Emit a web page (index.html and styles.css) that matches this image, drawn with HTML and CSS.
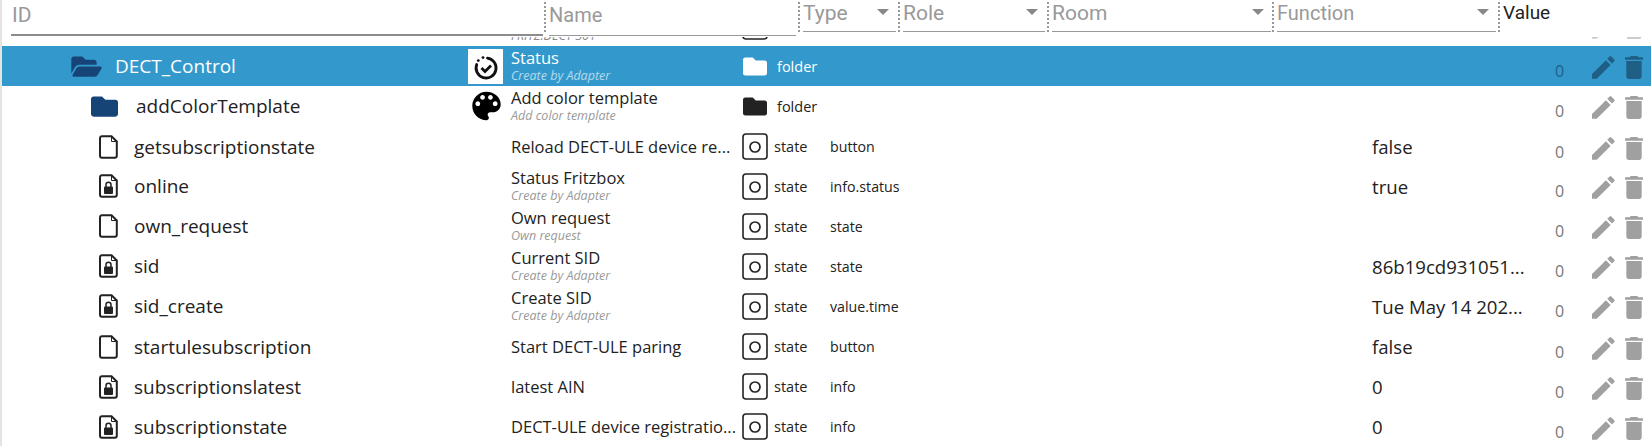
FILE: index.html
```html
<!DOCTYPE html>
<html lang="en">

<head>
  <meta charset="UTF-8" />
  <title>Objects</title>
  <link rel="stylesheet" href="styles.css">
</head>

<body>
  <svg class="defs" width="0" height="0">
    <symbol id="i-folder-open" viewBox="0 0 576 512"><path d="M572.694 292.093L500.27 416.248A63.997 63.997 0 0 1 444.989 448H45.025c-18.523 0-30.064-20.093-20.731-36.093l72.424-124.155A64 64 0 0 1 152 256h399.964c18.523 0 30.064 20.093 20.73 36.093zM152 224h328v-48c0-26.51-21.49-48-48-48H272l-64-64H48C21.49 64 0 85.49 0 112v278.046l69.077-118.418C86.214 242.25 117.989 224 152 224z"/></symbol>
    <symbol id="i-folder" viewBox="0 64 512 384"><path d="M464 128H272l-64-64H48C21.49 64 0 85.49 0 112v288c0 26.51 21.49 48 48 48h416c26.51 0 48-21.49 48-48V176c0-26.51-21.49-48-48-48z"/></symbol>
    <symbol id="i-file" viewBox="0 0 19 24"><path d="M3 1.2h9.500L17.800 6.500V20.800a2 2 0 0 1-2 2H3a2 2 0 0 1-2-2V3.200a2 2 0 0 1 2-2z" fill="none" stroke="currentColor" stroke-width="2"/><path d="M12.500 1.500V6.500H17.500" fill="none" stroke="currentColor" stroke-width="1"/></symbol>
    <symbol id="i-file-lock" viewBox="0 0 19 24"><path d="M3 1.2h9.500L17.800 6.500V20.800a2 2 0 0 1-2 2H3a2 2 0 0 1-2-2V3.200a2 2 0 0 1 2-2z" fill="none" stroke="currentColor" stroke-width="2"/><path d="M12.500 1.500V6.500H17.500" fill="none" stroke="currentColor" stroke-width="1"/><rect x="5" y="12.500" width="9" height="7.500" rx="1"/><path d="M7 13V10.800a2.500 2.500 0 0 1 5 0V13" fill="none" stroke="currentColor" stroke-width="1.500"/></symbol>
    <symbol id="i-state" viewBox="0 0 26 27"><rect x="1" y="1" width="24" height="25" rx="3" fill="none" stroke="currentColor" stroke-width="1.600"/><circle cx="13" cy="14" r="5" fill="none" stroke="currentColor" stroke-width="1.700"/></symbol>
    <symbol id="i-palette" viewBox="2.500 2.500 19 19"><path d="M12 3c-4.970 0-9 4.030-9 9s4.030 9 9 9c.830 0 1.500-.670 1.500-1.500 0-.390-.150-.740-.390-1.010-.230-.260-.380-.610-.380-.990 0-.830.670-1.500 1.500-1.500H16c2.760 0 5-2.240 5-5 0-4.420-4.030-8-9-8zm-5.500 9c-.830 0-1.500-.670-1.500-1.500S5.670 9 6.500 9 8 9.670 8 10.500 7.330 12 6.500 12zm3-4C8.670 8 8 7.330 8 6.500S8.670 5 9.500 5s1.500.670 1.500 1.500S10.330 8 9.500 8zm5 0c-.830 0-1.500-.670-1.500-1.500S13.670 5 14.500 5s1.500.670 1.500 1.500S15.330 8 14.500 8zm3 4c-.830 0-1.500-.670-1.500-1.500S16.670 9 17.500 9s1.500.670 1.500 1.500-.670 1.500-1.500 1.500z"/></symbol>
    <symbol id="i-status" viewBox="0 0 35 35"><path d="M19.500 9.100a10 10 0 1 1-10.800 6.400" fill="none" stroke="#111" stroke-width="2.800" stroke-linecap="round"/><circle cx="10.300" cy="11.600" r="1.400" fill="#111"/><circle cx="15" cy="8.600" r="1.400" fill="#111"/><path d="M13.500 19l3.500 3.500 6-6" fill="none" stroke="#111" stroke-width="2.800"/></symbol>
    <symbol id="i-edit" viewBox="3 3 18.300 18"><path d="M3 17.250V21h3.750L17.810 9.940l-3.750-3.750L3 17.250zM20.710 7.040c.39-.39.39-1.020 0-1.410l-2.340-2.340a.9959.9959 0 0 0-1.410 0l-1.830 1.830 3.750 3.750 1.830-1.830z"/></symbol>
    <symbol id="i-delete" viewBox="5 3 14 18"><path d="M6 19c0 1.100.9 2 2 2h8c1.100 0 2-.9 2-2V7H6v12zM19 4h-3.500l-1-1h-5l-1 1H5v2h14V4z"/></symbol>
  </svg>

  <div class="page">
    <div class="filters">
      <div class="filter filter-id"><span class="filter-label">ID</span></div>
      <div class="filter filter-name"><span class="filter-label">Name</span></div>
      <div class="filter filter-type"><span class="filter-label">Type</span><i class="arrow"></i></div>
      <div class="filter filter-role"><span class="filter-label">Role</span><i class="arrow"></i></div>
      <div class="filter filter-room"><span class="filter-label">Room</span><i class="arrow"></i></div>
      <div class="filter filter-func"><span class="filter-label">Function</span><i class="arrow"></i></div>
      <div class="filter-value">Value</div>
    </div>

    <div class="peek">
      <div class="row">
        <div class="cell-id"></div>
        <div class="cell-icon"><svg class="lamp" width="26" height="16"><ellipse cx="13" cy="4" rx="12" ry="4" fill="#bbb"/></svg></div>
        <div class="cell-name"><div class="title">&nbsp;</div><div class="sub">FRITZ!DECT 301</div></div>
        <div class="cell-type"><svg class="ic-state"><use href="#i-state"/></svg></div>
        <div class="cell-role"></div>
        <div class="cell-value"></div>
        <div class="cell-zero"></div>
        <div class="cell-actions">
          <svg class="ic-edit"><use href="#i-edit"/></svg>
          <svg class="ic-delete"><use href="#i-delete"/></svg>
        </div>
      </div>
    </div>

    <div class="row selected">
      <div class="cell-id depth-1"><svg class="ic-folder-open"><use href="#i-folder-open"/></svg><span>DECT_Control</span></div>
      <div class="cell-icon"><span class="icon-box"><svg class="ic-status"><use href="#i-status"/></svg></span></div>
      <div class="cell-name"><div class="title">Status</div><div class="sub">Create by Adapter</div></div>
      <div class="cell-type"><svg class="ic-type-folder"><use href="#i-folder"/></svg><span>folder</span></div>
      <div class="cell-role"></div>
      <div class="cell-value"></div>
      <div class="cell-zero">0</div>
      <div class="cell-actions">
        <svg class="ic-edit"><use href="#i-edit"/></svg>
        <svg class="ic-delete"><use href="#i-delete"/></svg>
      </div>
    </div>

    <div class="row">
      <div class="cell-id depth-2"><svg class="ic-folder"><use href="#i-folder"/></svg><span>addColorTemplate</span></div>
      <div class="cell-icon"><svg class="ic-palette"><use href="#i-palette"/></svg></div>
      <div class="cell-name"><div class="title">Add color template</div><div class="sub">Add color template</div></div>
      <div class="cell-type"><svg class="ic-type-folder"><use href="#i-folder"/></svg><span>folder</span></div>
      <div class="cell-role"></div>
      <div class="cell-value"></div>
      <div class="cell-zero">0</div>
      <div class="cell-actions">
        <svg class="ic-edit"><use href="#i-edit"/></svg>
        <svg class="ic-delete"><use href="#i-delete"/></svg>
      </div>
    </div>

    <div class="row">
      <div class="cell-id depth-3"><svg class="ic-file"><use href="#i-file"/></svg><span>getsubscriptionstate</span></div>
      <div class="cell-icon"></div>
      <div class="cell-name"><div class="title">Reload DECT-ULE device re...</div></div>
      <div class="cell-type"><svg class="ic-state"><use href="#i-state"/></svg><span>state</span></div>
      <div class="cell-role">button</div>
      <div class="cell-value">false</div>
      <div class="cell-zero">0</div>
      <div class="cell-actions">
        <svg class="ic-edit"><use href="#i-edit"/></svg>
        <svg class="ic-delete"><use href="#i-delete"/></svg>
      </div>
    </div>

    <div class="row">
      <div class="cell-id depth-3"><svg class="ic-file"><use href="#i-file-lock"/></svg><span>online</span></div>
      <div class="cell-icon"></div>
      <div class="cell-name"><div class="title">Status Fritzbox</div><div class="sub">Create by Adapter</div></div>
      <div class="cell-type"><svg class="ic-state"><use href="#i-state"/></svg><span>state</span></div>
      <div class="cell-role">info.status</div>
      <div class="cell-value">true</div>
      <div class="cell-zero">0</div>
      <div class="cell-actions">
        <svg class="ic-edit"><use href="#i-edit"/></svg>
        <svg class="ic-delete"><use href="#i-delete"/></svg>
      </div>
    </div>

    <div class="row">
      <div class="cell-id depth-3"><svg class="ic-file"><use href="#i-file"/></svg><span>own_request</span></div>
      <div class="cell-icon"></div>
      <div class="cell-name"><div class="title">Own request</div><div class="sub">Own request</div></div>
      <div class="cell-type"><svg class="ic-state"><use href="#i-state"/></svg><span>state</span></div>
      <div class="cell-role">state</div>
      <div class="cell-value"></div>
      <div class="cell-zero">0</div>
      <div class="cell-actions">
        <svg class="ic-edit"><use href="#i-edit"/></svg>
        <svg class="ic-delete"><use href="#i-delete"/></svg>
      </div>
    </div>

    <div class="row">
      <div class="cell-id depth-3"><svg class="ic-file"><use href="#i-file-lock"/></svg><span>sid</span></div>
      <div class="cell-icon"></div>
      <div class="cell-name"><div class="title">Current SID</div><div class="sub">Create by Adapter</div></div>
      <div class="cell-type"><svg class="ic-state"><use href="#i-state"/></svg><span>state</span></div>
      <div class="cell-role">state</div>
      <div class="cell-value">86b19cd931051...</div>
      <div class="cell-zero">0</div>
      <div class="cell-actions">
        <svg class="ic-edit"><use href="#i-edit"/></svg>
        <svg class="ic-delete"><use href="#i-delete"/></svg>
      </div>
    </div>

    <div class="row">
      <div class="cell-id depth-3"><svg class="ic-file"><use href="#i-file-lock"/></svg><span>sid_create</span></div>
      <div class="cell-icon"></div>
      <div class="cell-name"><div class="title">Create SID</div><div class="sub">Create by Adapter</div></div>
      <div class="cell-type"><svg class="ic-state"><use href="#i-state"/></svg><span>state</span></div>
      <div class="cell-role">value.time</div>
      <div class="cell-value">Tue May 14 202...</div>
      <div class="cell-zero">0</div>
      <div class="cell-actions">
        <svg class="ic-edit"><use href="#i-edit"/></svg>
        <svg class="ic-delete"><use href="#i-delete"/></svg>
      </div>
    </div>

    <div class="row">
      <div class="cell-id depth-3"><svg class="ic-file"><use href="#i-file"/></svg><span>startulesubscription</span></div>
      <div class="cell-icon"></div>
      <div class="cell-name"><div class="title">Start DECT-ULE paring</div></div>
      <div class="cell-type"><svg class="ic-state"><use href="#i-state"/></svg><span>state</span></div>
      <div class="cell-role">button</div>
      <div class="cell-value">false</div>
      <div class="cell-zero">0</div>
      <div class="cell-actions">
        <svg class="ic-edit"><use href="#i-edit"/></svg>
        <svg class="ic-delete"><use href="#i-delete"/></svg>
      </div>
    </div>

    <div class="row">
      <div class="cell-id depth-3"><svg class="ic-file"><use href="#i-file-lock"/></svg><span>subscriptionslatest</span></div>
      <div class="cell-icon"></div>
      <div class="cell-name"><div class="title">latest AIN</div></div>
      <div class="cell-type"><svg class="ic-state"><use href="#i-state"/></svg><span>state</span></div>
      <div class="cell-role">info</div>
      <div class="cell-value">0</div>
      <div class="cell-zero">0</div>
      <div class="cell-actions">
        <svg class="ic-edit"><use href="#i-edit"/></svg>
        <svg class="ic-delete"><use href="#i-delete"/></svg>
      </div>
    </div>

    <div class="row">
      <div class="cell-id depth-3"><svg class="ic-file"><use href="#i-file-lock"/></svg><span>subscriptionstate</span></div>
      <div class="cell-icon"></div>
      <div class="cell-name"><div class="title">DECT-ULE device registratio...</div></div>
      <div class="cell-type"><svg class="ic-state"><use href="#i-state"/></svg><span>state</span></div>
      <div class="cell-role">info</div>
      <div class="cell-value">0</div>
      <div class="cell-zero">0</div>
      <div class="cell-actions">
        <svg class="ic-edit"><use href="#i-edit"/></svg>
        <svg class="ic-delete"><use href="#i-delete"/></svg>
      </div>
    </div>
  </div>
</body>

</html>
```

FILE: styles.css
```css
html, body {
  margin: 0;
  height: 100%;
  overflow: hidden;
  background-color: #fff;
}

.defs {
  display: block;
  height: 0;
}

.page {
  height: 446px;
  overflow: hidden;
  border-left: 2px solid #e4e4e4;
  font-family: 'Open Sans', sans-serif;
  color: #222;
}

/* filter header */
.filters {
  display: flex;
  height: 37px;
  font-family: Roboto, sans-serif;
}

.filter {
  display: flex;
  box-sizing: border-box;
  height: 36px;
  padding-top: 4px;
  color: #999;
  font-size: 20px;
}

.filter-label {
  line-height: 22px;
}

.filter-id {
  width: 532px;
  margin-left: 9px;
  padding-left: 1px;
  border-bottom: 2px solid #8c8c8c;
  font-size: 21px;
}

.filter-name {
  width: 247px;
  margin-left: 6px;
  border-bottom: 1px solid #999;
  position: relative;
}

.filter-type, .filter-role, .filter-room, .filter-func {
  height: 32px;
  padding-top: 2px;
  border-bottom: 1px solid #999;
  justify-content: space-between;
  margin-left: 7px;
  position: relative;
  font-size: 21px;
}

.filter-type { width: 93px; }
.filter-role { width: 142px; }
.filter-room { width: 219px; }
.filter-func { width: 219px; margin-left: 6px; font-size: 20px; }

/* dotted column separators */
.filter-name::before, .filter-type::before, .filter-role::before, .filter-room::before, .filter-func::before, .filter-value::before {
  content: "";
  position: absolute;
  left: -5px;
  top: 2px;
  height: 30px;
  border-left: 2px dotted #999;
}

.arrow {
  width: 0;
  height: 0;
  margin: 7px 7px 0 0;
  border-left: 6px solid transparent;
  border-right: 6px solid transparent;
  border-top: 6px solid #888;
}

.filter-value {
  position: relative;
  margin-left: 7px;
  padding-top: 2px;
  font-size: 19px;
  line-height: 22px;
  color: #222;
}

/* the row scrolled under the header */
.peek {
  height: 9px;
  overflow: hidden;
}

.peek .row {
  margin-top: -31px;
}

.lamp {
  margin: 16px 0 0 3px;
}

/* table rows */
.row {
  display: grid;
  grid-template-columns: 466px 43px 231px 88px 542px 183px 37px 57px;
  align-items: center;
  height: 40px;
}

.cell-id {
  display: flex;
  align-items: center;
  font-size: 19px;
  white-space: nowrap;
}

.depth-1 { padding-left: 69px; }
.depth-1 span { margin-left: 13px; }
.depth-2 { padding-left: 89px; }
.depth-2 span { margin-left: 18px; }
.depth-3 { padding-left: 97px; }
.depth-3 span { margin-left: 16px; }

.ic-folder-open { width: 31px; height: 27px; fill: #164477; }
.ic-folder { width: 27px; height: 21px; fill: #164477; }
.ic-file { width: 19px; height: 24px; color: #222; fill: #222; }

.cell-icon {
  display: flex;
  align-items: center;
}

.icon-box {
  display: flex;
  width: 35px;
  height: 35px;
  margin-top: 1px;
  background-color: #fff;
}

.ic-status { width: 35px; height: 35px; }
.ic-palette { width: 31px; height: 30px; margin: 0 0 0 3px; fill: #000; }

.cell-name {
  white-space: nowrap;
  margin-top: 1px;
}

.title {
  font-size: 16.5px;
  line-height: 20px;
}

.sub {
  margin-top: -1px;
  font-size: 12.5px;
  line-height: 18px;
  font-style: italic;
  color: #999;
}

.row .title:only-child {
  line-height: 40px;
}

.cell-type {
  display: flex;
  align-items: center;
  font-size: 14.5px;
}

.ic-state { width: 26px; height: 27px; color: #222; flex: none; }
.ic-state + span { margin-left: 6px; }
.ic-type-folder { width: 24px; height: 21px; margin-left: 1px; fill: #222; flex: none; }
.ic-type-folder + span { margin-left: 10px; }

.cell-role {
  font-size: 14.2px;
}

.cell-value {
  font-size: 18.6px;
  white-space: nowrap;
}

.cell-zero {
  margin-top: 10px;
  font-size: 16px;
  color: #777;
}

.cell-actions {
  display: flex;
  align-items: center;
  margin-top: 3px;
  gap: 10px;
}

.ic-edit { width: 23px; height: 23px; fill: #a0a0a0; }
.ic-delete { width: 18px; height: 23px; fill: #a0a0a0; }

/* selected row */
.selected {
  background-color: #3399cc;
  color: #fff;
}

.selected .sub { color: #b5dbef; }
.selected .ic-type-folder { fill: #fff; }
.selected .cell-zero { color: #1f5f85; }
.selected .ic-edit, .selected .ic-delete { fill: #1f5f85; }

.peek .sub { color: #888; }
.peek .ic-edit, .peek .ic-delete { fill: #ccc; }
```
